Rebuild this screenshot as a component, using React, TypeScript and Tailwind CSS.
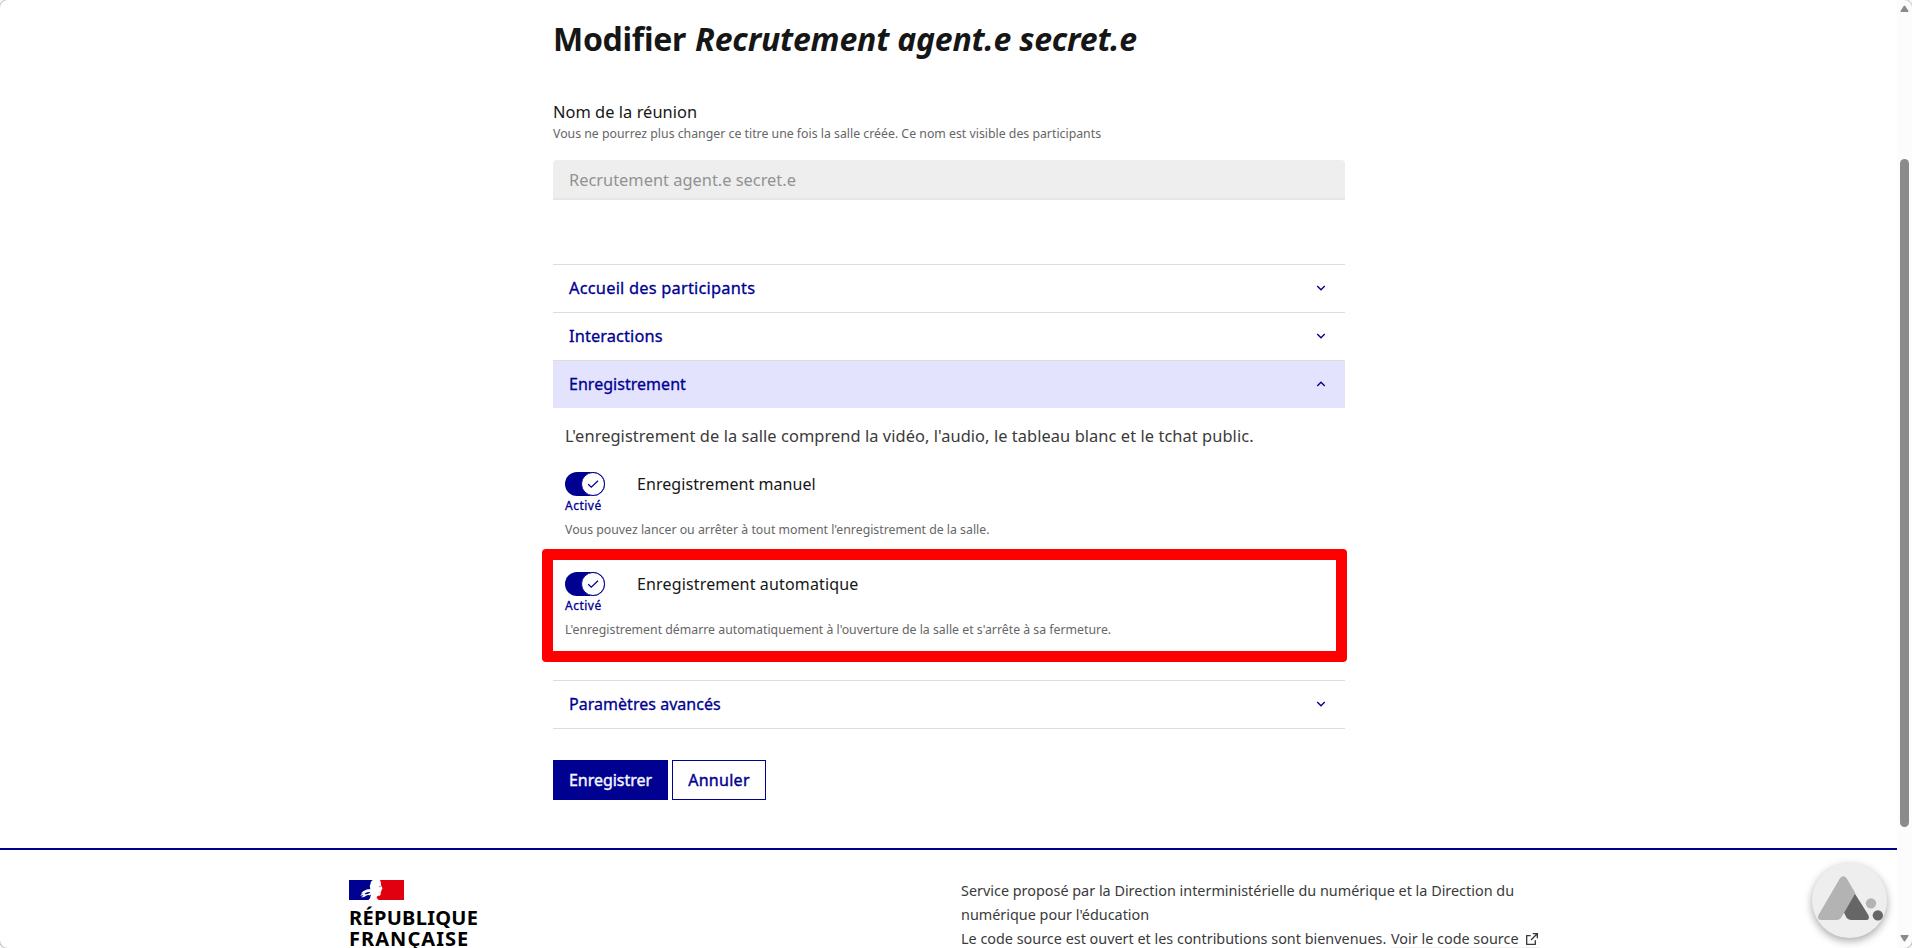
import type { ReactNode } from 'react';

function Chevron({ open = false }: { open?: boolean }) {
  return (
    <svg viewBox="0 0 24 24" className="size-4" fill="currentColor" aria-hidden="true">
      {open ? (
        <path d="M12 10.828l-4.95 4.95-1.414-1.414L12 8l6.364 6.364-1.414 1.414z" />
      ) : (
        <path d="M12 13.172l4.95-4.95 1.414 1.414L12 16 5.636 9.636 7.05 8.222z" />
      )}
    </svg>
  );
}

function AccordionHeader({ children, open = false }: { children: ReactNode; open?: boolean }) {
  return (
    <button
      type="button"
      className={
        open
          ? 'flex h-12 w-full items-center justify-between border-t border-[#dddddd] bg-[#e3e3fd] px-4 pb-px text-[#000091] [-webkit-text-stroke:0.3px]'
          : 'flex h-12 w-full items-center justify-between border-t border-[#dddddd] px-4 pb-px text-[#000091] [-webkit-text-stroke:0.3px]'
      }
    >
      {children}
      <Chevron open={open} />
    </button>
  );
}

function Toggle({ label, hint }: { label: ReactNode; hint: string }) {
  return (
    <div className="h-[100px]">
      <div className="flex gap-8">
        <div className="flex h-6 w-10 justify-end rounded-full bg-[#000091]">
          <span className="size-6 rounded-full border border-[#000091] bg-white">
            <svg viewBox="1 1 22 22" className="size-[22px]" fill="none" stroke="#000091" strokeWidth="1.3" aria-hidden="true">
              <path d="M7.2 12.2l3.1 3L17 8.800" />
            </svg>
          </span>
        </div>
        {label}
      </div>
      <p className="text-xs leading-5 tracking-[0.5px] text-[#000091] [-webkit-text-stroke:0.3px]">Activé</p>
      <p className="mt-1 text-[12.3px] leading-5 text-[#666666]">{hint}</p>
    </div>
  );
}

function Flag() {
  return (
    <svg viewBox="12 15 193 60" preserveAspectRatio="none" className="h-5 w-[55px]" aria-hidden="true">
      <rect x="12" y="15" width="193" height="60" fill="#fff" />
      <path
        d="M12 15h84c-6 3-9 7-8 12-4 3-2 6-3 9 3 3 2 6-1 7-6-1-10 0-15 3-6 2-11 5-15 10l8-2c-4 3-8 5-11 8 6-2 9-2 12 0-4 2-7 3-9 5 8 0 13-2 18-5 6-3 11-3 15 2 1 5-3 9-7 11H12z"
        fill="#000091"
      />
      <path d="M66 57c6-5 13-6 21-6-4 5-11 8-21 6zM78 65c5-1 9-3 11-7 2 5-3 9-11 7z" fill="#000091" />
      <path
        d="M205 15h-85c3 4 5 8 4 13 0 3 2 6 5 11 1 3-1 4-3 5 1 3 0 4-2 5 1 2 1 4-1 5 1 5-1 8-5 8-5 0-9 2-9 5 1 4 4 6 8 8h88z"
        fill="#e1000f"
      />
      <path d="M118 33l6 1-4 3zM116 51h6" fill="#777" stroke="#888" strokeWidth="1" />
    </svg>
  );
}

function AssistantBadge() {
  return (
    <button
      type="button"
      className="absolute top-[863px] left-[1812px] size-[75px] rounded-full bg-[#eeeeee] shadow-[0_3px_9px_rgba(0,0,0,0.35)]"
    >
      <svg viewBox="96 69 225 225" className="size-[75px]" aria-hidden="true">
        <path d="M190 214L224 160L265 225Q271 240 258 240H212Q203 240 199 232Z" fill="#666" />
        <path d="M180 115Q190 102 200 115L226 160L185 231Q180 240 169 240H124Q109 239 116 224Z" fill="#b3b3b3" />
        <circle cx="273" cy="190" r="15.5" fill="#b3b3b3" />
        <circle cx="293.5" cy="226" r="15.5" fill="#666" />
      </svg>
    </button>
  );
}

function Scrollbar() {
  return (
    <div className="flex w-[15px] shrink-0 flex-col items-center bg-[#fcfcfc]">
      <svg viewBox="0 0 9 7" className="mt-[5px] h-[7px] w-[9px]" aria-hidden="true">
        <path d="M3.7 1Q4.5 0 5.3 1L8.5 6Q8.7 7 8 7H1Q.3 7 .5 6Z" fill="#8b8b8b" />
      </svg>
      <div className="mt-[147px] h-[668px] w-[9px] rounded-full bg-[#8b8b8b]" />
      <svg viewBox="0 0 9 7" className="mt-[108px] h-[7px] w-[9px]" aria-hidden="true">
        <path d="M3.7 6Q4.5 7 5.3 6L8.5 1Q8.7 0 8 0H1Q.3 0 .5 1Z" fill="#8b8b8b" />
      </svg>
    </div>
  );
}

export default function App() {
  return (
    <div className="relative flex h-[948px] w-[1912px] overflow-hidden bg-white font-['Noto_Sans',sans-serif] text-base text-[#161616]">
      <div className="flex w-[1897px] flex-col">
        <main className="ml-[553px] h-[848px] w-[792px] pt-[19px]">
          <h1 className="flex gap-[9px] text-[32px] leading-10 font-bold whitespace-nowrap">
            <span className="tracking-[-0.28px]">Modifier</span>
            <em className="tracking-[-0.2px]">Recrutement agent.e secret.e</em>
          </h1>

          <label className="mt-[41px] block text-[16.4px] leading-6 tracking-[0.04px]">Nom de la réunion</label>
          <p className="text-[12.3px] leading-5 text-[#666666]">
            Vous ne pourrez plus changer ce titre une fois la salle créée. Ce nom est visible des participants
          </p>
          <div className="mt-4 h-10 rounded-t border-b-2 border-[#e5e5e5] bg-[#eeeeee] px-4 pt-2 text-[16.4px] leading-6 text-[#929292]">
            Recrutement agent.e secret.e
          </div>

          <section className="mt-16 border-b border-[#dddddd]">
            <AccordionHeader>
              <span className="text-[16.4px] leading-6 tracking-[0.21px]">Accueil des participants</span>
            </AccordionHeader>
            <AccordionHeader>
              <span className="text-[16.4px] leading-6 tracking-[0.1px]">Interactions</span>
            </AccordionHeader>
            <AccordionHeader open>
              <span className="tracking-[0.03px]">Enregistrement</span>
            </AccordionHeader>
            <div className="h-[272px] px-3 pt-4">
              <p className="text-[16.4px] leading-6 tracking-[0.07px] whitespace-nowrap text-[#3a3a3a]">
                L'enregistrement de la salle comprend la vidéo, l'audio, le tableau blanc et le tchat public.
              </p>
              <div className="mt-6">
                <Toggle
                  label={<span className="tracking-[0.06px]">Enregistrement manuel</span>}
                  hint="Vous pouvez lancer ou arrêter à tout moment l'enregistrement de la salle."
                />
                <Toggle
                  label={<span className="tracking-[0.15px]">Enregistrement automatique</span>}
                  hint="L'enregistrement démarre automatiquement à l'ouverture de la salle et s'arrête à sa fermeture."
                />
              </div>
            </div>
            <AccordionHeader>
              <span className="tracking-[0.03px]">Paramètres avancés</span>
            </AccordionHeader>
          </section>

          <div className="mt-[31px] flex gap-1 [-webkit-text-stroke:0.4px]">
            <button type="button" className="h-10 w-[115px] bg-[#000091] tracking-[-0.04px] text-[#f5f5fe]">
              Enregistrer
            </button>
            <button type="button" className="h-10 w-[94px] border border-[#000091] tracking-[0.28px] text-[#000091]">
              Annuler
            </button>
          </div>
        </main>

        <footer className="flex h-[100px] border-t-2 border-[#000091] pl-[349px]">
          <div className="w-[612px] pt-[30px]">
            <Flag />
            <div className="mt-[7px] text-xl leading-[21px] font-bold text-black">
              <p className="tracking-[0.3px]">RÉPUBLIQUE</p>
              <p className="tracking-[1.05px]">FRANÇAISE</p>
            </div>
          </div>
          <div className="pt-[29px] text-[14.4px] leading-6 whitespace-nowrap text-[#3a3a3a]">
            <p>Service proposé par la Direction interministérielle du numérique et la Direction du</p>
            <p>numérique pour l'éducation</p>
            <div className="flex">
              <p className="w-[430px]">Le code source est ouvert et les contributions sont bienvenues.</p>
              <a className="flex h-[21px] gap-1 border-b border-[#f0f0f0]">
                <span className="w-[129px]">Voir le code source</span>
                <svg viewBox="0 0 24 24" className="mt-1 size-4" fill="currentColor" aria-hidden="true">
                  <path d="M10 6v2H5v11h11v-5h2v6a1 1 0 01-1 1H4a1 1 0 01-1-1V7a1 1 0 011-1h6zm11-3v8h-2V6.413l-7.793 7.794-1.414-1.414L17.585 5H13V3h8z" />
                </svg>
              </a>
            </div>
          </div>
        </footer>
      </div>

      <Scrollbar />
      <div className="pointer-events-none absolute top-[549px] left-[542px] h-[113px] w-[805px] rounded-[4px] border-[11px] border-[#ff0000]" />
      <AssistantBadge />
      <div className="pointer-events-none absolute inset-0 rounded-lg shadow-[0_0_0_1px_#c8c8c8,0_0_0_8px_#f7f7f7]" />
    </div>
  );
}
